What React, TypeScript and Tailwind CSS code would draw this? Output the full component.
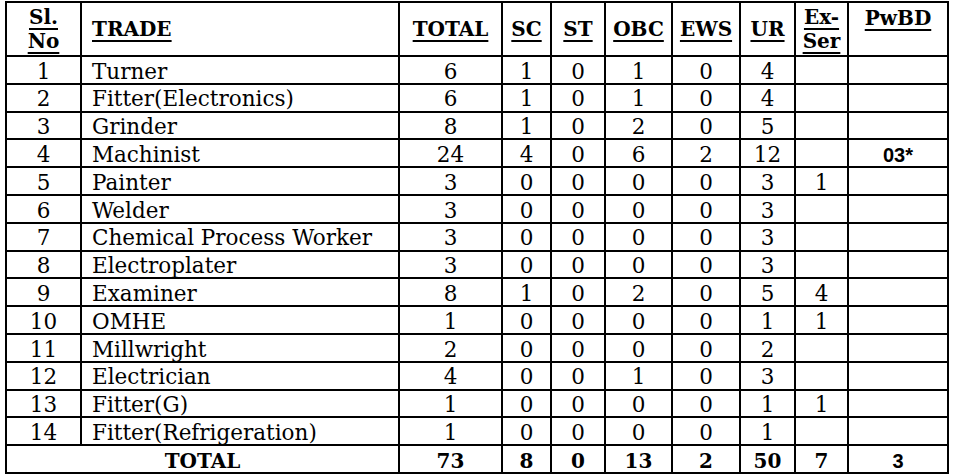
const rows: [number, string, number, number, number, number, number, number, string, string][] = [
  [1, "Turner", 6, 1, 0, 1, 0, 4, "", ""],
  [2, "Fitter(Electronics)", 6, 1, 0, 1, 0, 4, "", ""],
  [3, "Grinder", 8, 1, 0, 2, 0, 5, "", ""],
  [4, "Machinist", 24, 4, 0, 6, 2, 12, "", "03*"],
  [5, "Painter", 3, 0, 0, 0, 0, 3, "1", ""],
  [6, "Welder", 3, 0, 0, 0, 0, 3, "", ""],
  [7, "Chemical Process Worker", 3, 0, 0, 0, 0, 3, "", ""],
  [8, "Electroplater", 3, 0, 0, 0, 0, 3, "", ""],
  [9, "Examiner", 8, 1, 0, 2, 0, 5, "4", ""],
  [10, "OMHE", 1, 0, 0, 0, 0, 1, "1", ""],
  [11, "Millwright", 2, 0, 0, 0, 0, 2, "", ""],
  [12, "Electrician", 4, 0, 0, 1, 0, 3, "", ""],
  [13, "Fitter(G)", 1, 0, 0, 0, 0, 1, "1", ""],
  [14, "Fitter(Refrigeration)", 1, 0, 0, 0, 0, 1, "", ""],
]

const cell = "border-2 border-black p-0 text-center leading-none"
const body = cell + " pt-[3px]"
const hd = "underline decoration-[1.5px] underline-offset-[4px]"
const sans = { fontFamily: '"Liberation Sans", sans-serif' }

export default function App() {
  return (
    <div className="h-[474px] w-[956px] bg-white pl-[5px] pt-[1px] text-black" style={{ fontFamily: '"DejaVu Serif", serif' }}>
      <table className="w-[944px] table-fixed border-collapse border-2 border-black text-[21.5px]">
        <colgroup>
          <col className="w-[75px]" />
          <col className="w-[318px]" />
          <col className="w-[103px]" />
          <col className="w-[49px]" />
          <col className="w-[54px]" />
          <col className="w-[67px]" />
          <col className="w-[68px]" />
          <col className="w-[55px]" />
          <col className="w-[53px]" />
          <col />
        </colgroup>
        <thead>
          {/* header row */}
          <tr className="h-[54px] font-bold text-[20px]">
            <th className={cell}>
              <div className="flex flex-col items-center gap-[4px]">
                <span className={hd}>Sl.</span>
                <span className={hd}>No</span>
              </div>
            </th>
            <th className={cell + " !text-left pl-[10px]"}><span className={hd}>TRADE</span></th>
            <th className={cell}><span className={hd}>TOTAL</span></th>
            <th className={cell}><span className={hd}>SC</span></th>
            <th className={cell}><span className={hd}>ST</span></th>
            <th className={cell}><span className={hd}>OBC</span></th>
            <th className={cell}><span className={hd}>EWS</span></th>
            <th className={cell}><span className={hd}>UR</span></th>
            <th className={cell}>
              <div className="flex flex-col items-center gap-[4px]">
                <span className={hd}>Ex-</span>
                <span className={hd}>Ser</span>
              </div>
            </th>
            <th className={cell + " align-top pt-[5px]"}><span className={hd}>PwBD</span></th>
          </tr>
        </thead>
        <tbody>
          {rows.map((r) => (
            <tr key={r[0]} className="h-[27.8px]">
              <td className={body}>{r[0]}</td>
              <td className={body + " !text-left pl-[10px]"}>{r[1]}</td>
              <td className={body}>{r[2]}</td>
              <td className={body}>{r[3]}</td>
              <td className={body}>{r[4]}</td>
              <td className={body}>{r[5]}</td>
              <td className={body}>{r[6]}</td>
              <td className={body}>{r[7]}</td>
              <td className={body}>{r[8]}</td>
              <td className={body + " font-bold text-[20px]"} style={sans}>{r[9]}</td>
            </tr>
          ))}
          {/* totals */}
          <tr className="h-[28px] font-bold text-[20px]">
            <td colSpan={2} className={body}>TOTAL</td>
            <td className={body}>73</td>
            <td className={body}>8</td>
            <td className={body}>0</td>
            <td className={body}>13</td>
            <td className={body}>2</td>
            <td className={body}>50</td>
            <td className={body}>7</td>
            <td className={body} style={sans}>3</td>
          </tr>
        </tbody>
      </table>
    </div>
  )
}
